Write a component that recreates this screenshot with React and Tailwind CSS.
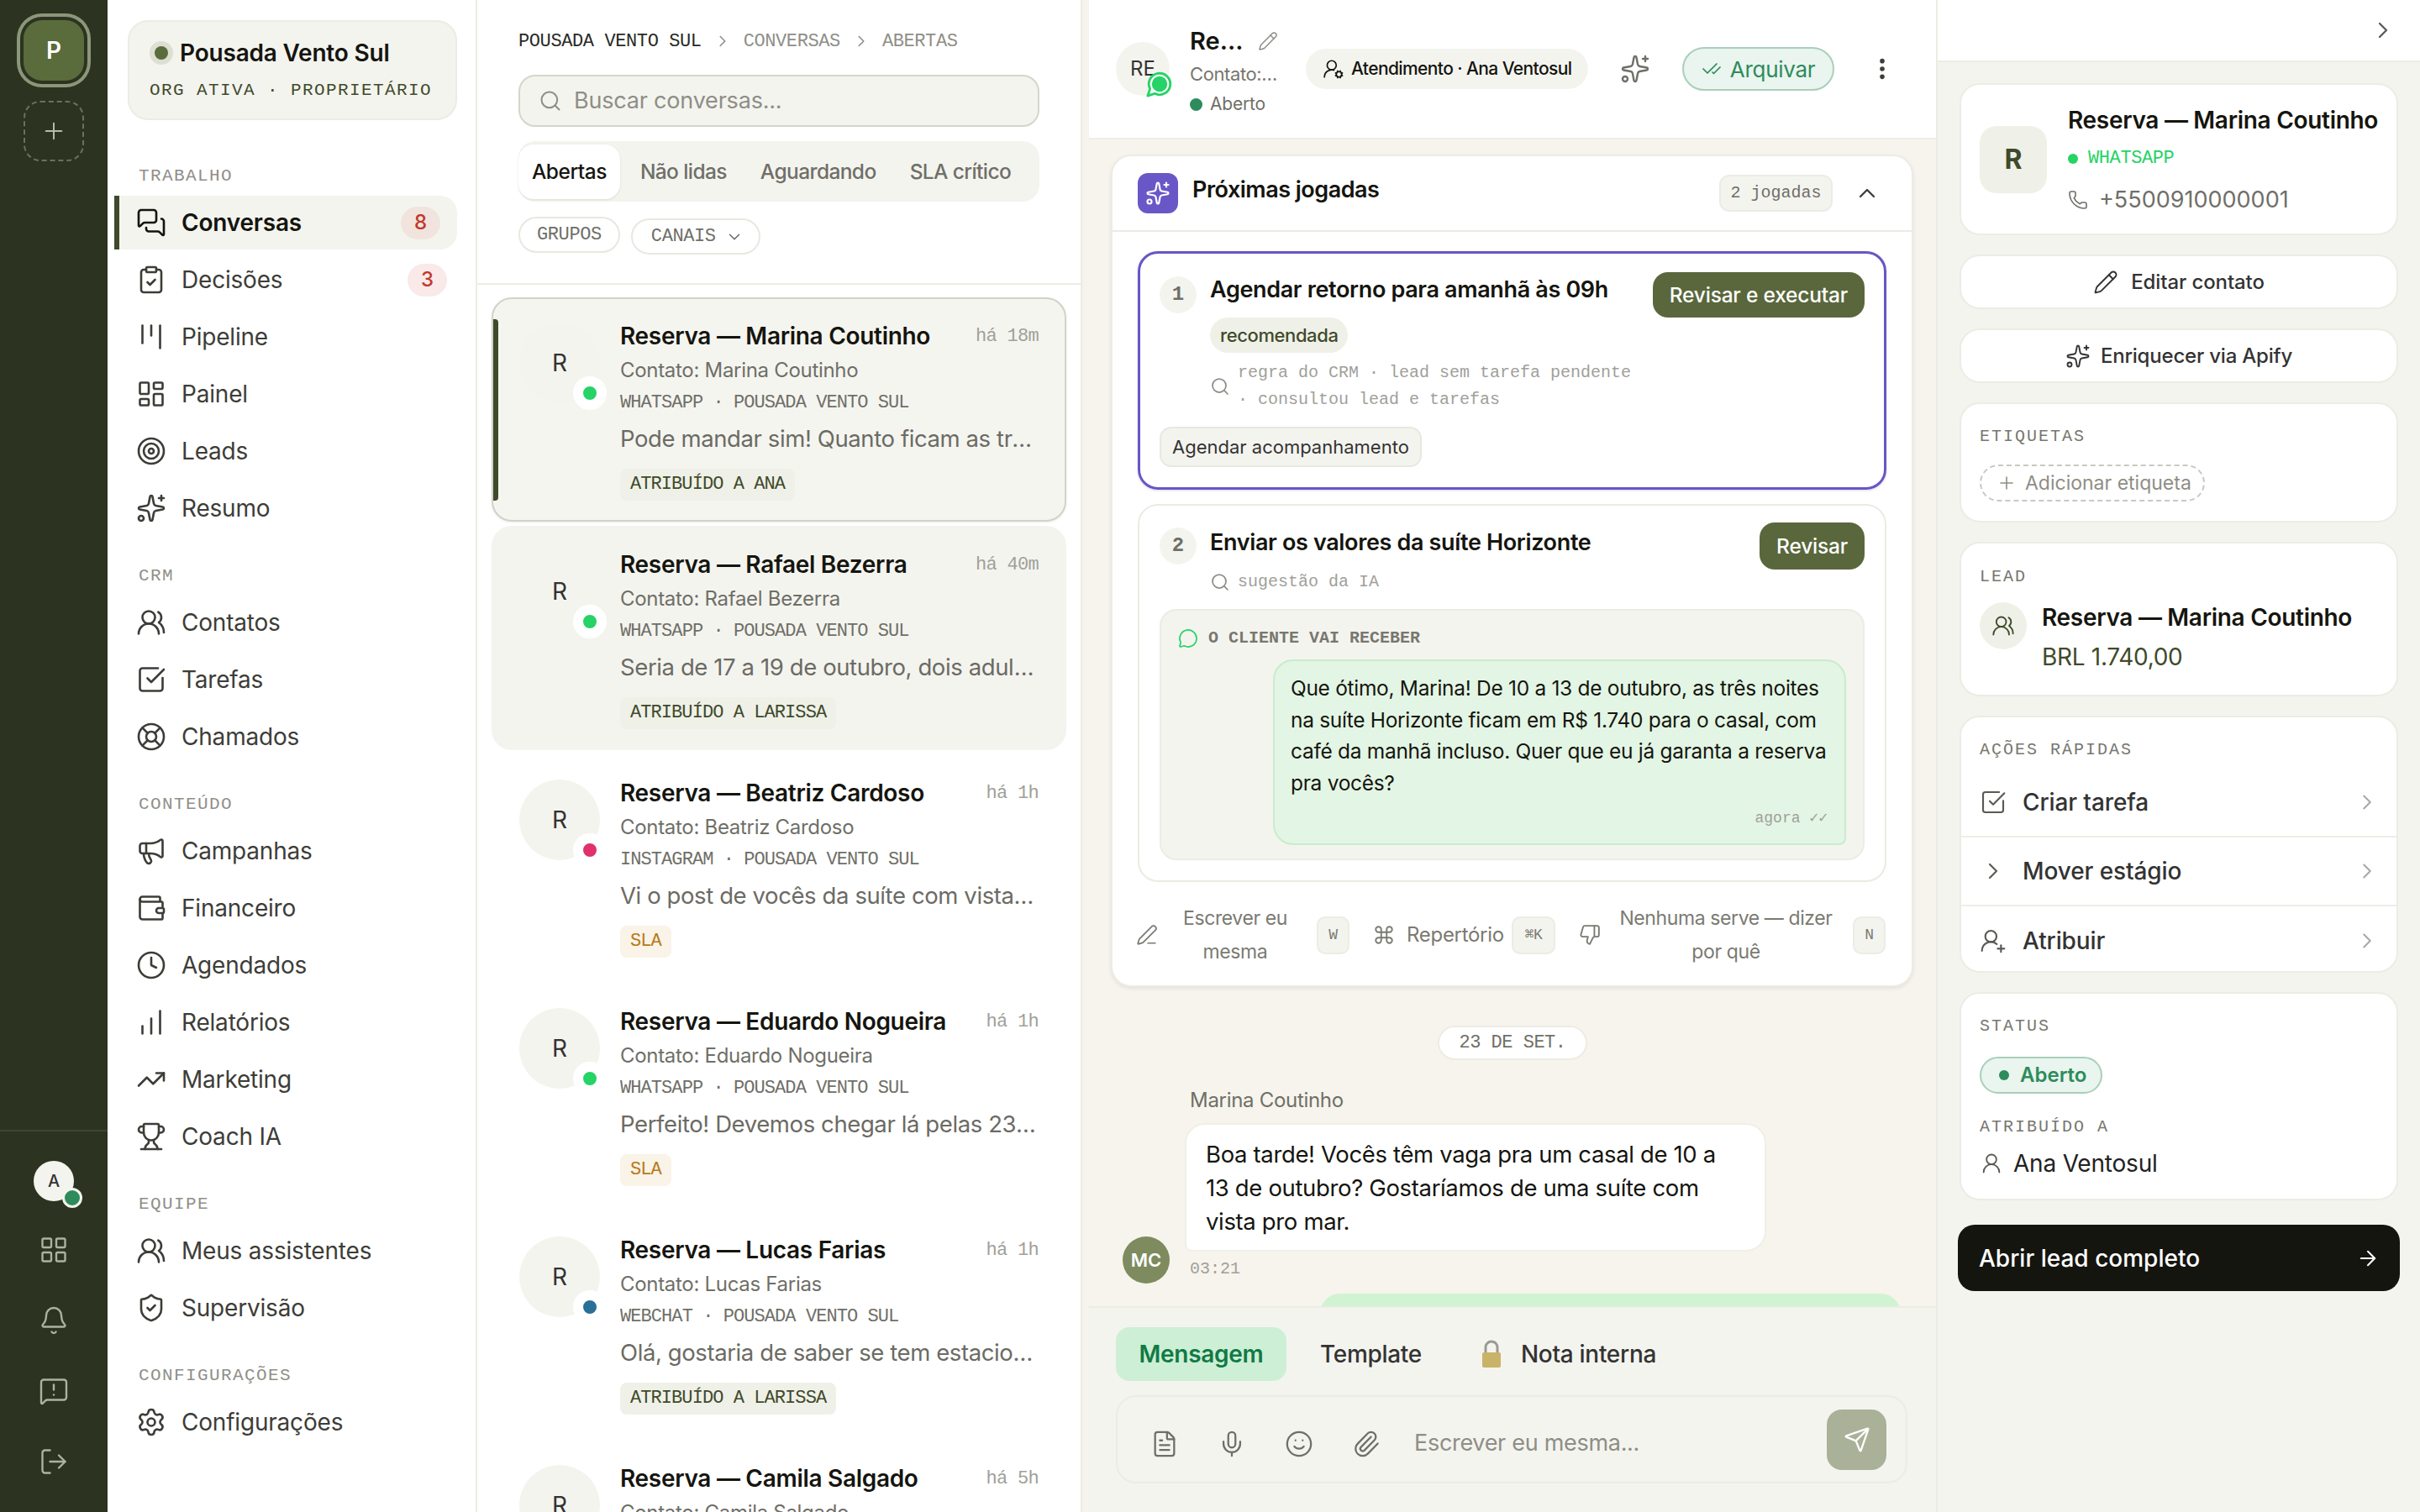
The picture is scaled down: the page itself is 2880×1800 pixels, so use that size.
import {
  ArrowRight, Bell, ChartNoAxesColumnIncreasing, CheckCheck, ChevronDown, ChevronRight, ChevronUp, ClipboardCheck,
  Clock, Command, EllipsisVertical, FileText, LayoutDashboard, LayoutGrid, LifeBuoy, LogOut, Megaphone,
  MessageCircle, MessageSquareWarning, MessagesSquare, Mic, Paperclip, Pencil, PenLine, Phone, Plus, Search, Send,
  Settings, ShieldCheck, Smile, Sparkles, SquareCheckBig, Target, ThumbsDown, TrendingUp, Trophy,
  UserRound, UserRoundCog, UserRoundPlus, UsersRound, Wallet, Kanban,
} from 'lucide-react';

const mono = "font-['Liberation_Mono',monospace]";

const navSections = [
  {
    label: 'TRABALHO',
    items: [
      { name: 'Conversas', icon: MessagesSquare, active: true, badge: '8' },
      { name: 'Decisões', icon: ClipboardCheck, badge: '3' },
      { name: 'Pipeline', icon: Kanban },
      { name: 'Painel', icon: LayoutDashboard },
      { name: 'Leads', icon: Target },
      { name: 'Resumo', icon: Sparkles },
    ],
  },
  {
    label: 'CRM',
    items: [
      { name: 'Contatos', icon: UsersRound },
      { name: 'Tarefas', icon: SquareCheckBig },
      { name: 'Chamados', icon: LifeBuoy },
    ],
  },
  {
    label: 'CONTEÚDO',
    items: [
      { name: 'Campanhas', icon: Megaphone },
      { name: 'Financeiro', icon: Wallet },
      { name: 'Agendados', icon: Clock },
      { name: 'Relatórios', icon: ChartNoAxesColumnIncreasing },
      { name: 'Marketing', icon: TrendingUp },
      { name: 'Coach IA', icon: Trophy },
    ],
  },
  {
    label: 'EQUIPE',
    items: [
      { name: 'Meus assistentes', icon: UsersRound },
      { name: 'Supervisão', icon: ShieldCheck },
    ],
  },
  {
    label: 'CONFIGURAÇÕES',
    items: [{ name: 'Configurações', icon: Settings }],
  },
];

const conversas = [
  { nome: 'Marina Coutinho', tempo: 'há 18m', canal: 'WHATSAPP', dot: 'bg-[#25d366]', preview: 'Pode mandar sim! Quanto ficam as três noites com café?', tag: 'ATRIBUÍDO A ANA', selected: true },
  { nome: 'Rafael Bezerra', tempo: 'há 40m', canal: 'WHATSAPP', dot: 'bg-[#25d366]', preview: 'Seria de 17 a 19 de outubro, dois adultos e uma criança', tag: 'ATRIBUÍDO A LARISSA', hover: true },
  { nome: 'Beatriz Cardoso', tempo: 'há 1h', canal: 'INSTAGRAM', dot: 'bg-[#e1306c]', preview: 'Vi o post de vocês da suíte com vista para o mar e adorei', tag: 'SLA', sla: true },
  { nome: 'Eduardo Nogueira', tempo: 'há 1h', canal: 'WHATSAPP', dot: 'bg-[#25d366]', preview: 'Perfeito! Devemos chegar lá pelas 23h, tem problema?', tag: 'SLA', sla: true },
  { nome: 'Lucas Farias', tempo: 'há 1h', canal: 'WEBCHAT', dot: 'bg-[#2a6f97]', preview: 'Olá, gostaria de saber se tem estacionamento na pousada', tag: 'ATRIBUÍDO A LARISSA' },
  { nome: 'Camila Salgado', tempo: 'há 5h', canal: 'WHATSAPP', dot: 'bg-[#25d366]', preview: 'Obrigada pelo retorno!', tag: 'SLA', sla: true },
];

function Rail() {
  const railIcons = [LayoutGrid, Bell, MessageSquareWarning, LogOut];
  return (
    <aside className="w-[128px] h-full shrink-0 bg-[#2c3320] flex flex-col items-center">
      <div className="mt-[24px] w-[72px] h-[72px] rounded-[22px] bg-[#5a6b3c] text-white text-[28px] font-semibold flex items-center justify-center shadow-[0_0_0_4px_#2c3320,0_0_0_8px_#8c9679]">
        P
      </div>
      <div className="mt-[24px] w-[72px] h-[72px] rounded-[20px] border-2 border-dashed border-[#6a7258] text-[#b4bba6] flex items-center justify-center">
        <Plus size={32} strokeWidth={1.5} />
      </div>
      <div className="mt-auto w-full border-t-2 border-[#3e4632] pt-[35px] pb-[42px] flex flex-col items-center">
        <div className="relative w-[48px] h-[48px] rounded-full bg-[#f4f4ef] text-[#333] text-[20px] font-medium flex items-center justify-center">
          A
          <span className="absolute right-[-10px] bottom-[-8px] w-[24px] h-[24px] rounded-full bg-[#2e8b5c] border-[3px] border-[#f4f4ef]" />
        </div>
        <div className="mt-[40px] flex flex-col items-center gap-[48px]">
          {railIcons.map((Icon, i) => (
            <Icon key={i} size={36} strokeWidth={1.6} className="text-[#aab3a0]" />
          ))}
        </div>
      </div>
    </aside>
  );
}

function NavItem({ item }) {
  const Icon = item.icon;
  return (
    <div
      className={`h-[64px] flex items-center gap-[18px] pl-[20px] border-l-[6px] rounded-r-[20px] ${
        item.active ? 'border-[#3f4a2c] bg-[#f4f4ef] text-[#15150f] font-semibold pr-[20px]' : 'border-transparent text-[#3d3d38] pr-[12px]'
      }`}
    >
      <Icon size={36} strokeWidth={1.75} className="shrink-0" />
      <span className="text-[28px] flex-1 tracking-[-0.2px]">{item.name}</span>
      {item.badge && (
        <span
          className={`w-[47px] h-[39px] rounded-full text-[24px] font-medium text-[#c0392b] flex items-center justify-center ${
            item.active ? 'bg-[#f1e4df]' : 'bg-[#f9e9e9]'
          }`}
        >
          {item.badge}
        </span>
      )}
    </div>
  );
}

function Sidebar() {
  return (
    <nav className="w-[440px] h-full shrink-0 bg-white border-r-2 border-[#ecece5] pl-[8px] pr-[22px]">
      <div className="ml-[16px] mt-[24px] h-[119px] rounded-[24px] bg-[#f4f4ef] border-2 border-[#ecece5] pl-[24px] pt-[16px]">
        <div className="flex items-center gap-[8px]">
          <span className="w-[28px] h-[28px] rounded-full bg-[#dcdfd2] flex items-center justify-center">
            <span className="w-[16px] h-[16px] rounded-full bg-[#5a6b3c]" />
          </span>
          <span className="text-[28px] font-semibold text-[#15150f] tracking-[-0.2px]">Pousada Vento Sul</span>
        </div>
        <div className={`${mono} text-[21px] tracking-[1.4px] text-[#3f4a2c] mt-[8px] whitespace-nowrap`}>ORG ATIVA · PROPRIETÁRIO</div>
      </div>
      <div className="mt-[52px]">
        {navSections.map((section) => (
          <div key={section.label} className="mt-[34px]">
            <div className={`${mono} h-[30px] leading-[30px] pl-[29px] mb-[8px] text-[21px] tracking-[1.4px] text-[#8f8f88]`}>{section.label}</div>
            <div className="flex flex-col gap-[4px]">
              {section.items.map((item) => (
                <NavItem key={item.name} item={item} />
              ))}
            </div>
          </div>
        ))}
      </div>
    </nav>
  );
}

function ConversaItem({ c }) {
  const cardClass = c.selected
    ? 'bg-[#f5f5f0] border-[#d2d2c8] shadow-[0_1px_3px_rgba(0,0,0,0.08)]'
    : c.hover
    ? 'bg-[#f4f4ef] border-transparent'
    : 'bg-white border-transparent';
  return (
    <div className={`relative shrink-0 h-[267px] rounded-[24px] border-2 flex pl-[31px] pr-[31px] pt-[26px] ${cardClass}`}>
      {c.selected && <span className="absolute left-0 top-[24px] bottom-[23px] w-[6px] rounded-r-[4px] bg-[#3f4a2c]" />}
      <div className="relative mt-[2px] w-[96px] h-[96px] shrink-0 rounded-full bg-[#f4f4ef] text-[#333] text-[28px] flex items-center justify-center">
        R
        <span className={`absolute right-[-8px] bottom-[-8px] w-[40px] h-[40px] rounded-full border-[12px] border-white ${c.dot}`} />
      </div>
      <div className="ml-[24px] flex-1 min-w-0">
        <div className="h-[36px] flex items-center justify-between">
          <span className="text-[28px] font-semibold text-[#15150f] tracking-[-0.3px] whitespace-nowrap">Reserva — {c.nome}</span>
          <span className={`${mono} text-[22px] tracking-[-0.7px] text-[#a0a09a] whitespace-nowrap`}>{c.tempo}</span>
        </div>
        <div className="mt-[8px] h-[30px] leading-[30px] text-[24px] text-[#6f6f68] tracking-[-0.3px]">Contato: {c.nome}</div>
        <div className={`${mono} mt-[11px] h-[26px] leading-[26px] text-[22px] tracking-[-0.93px] text-[#6f6f68]`}>{c.canal} · POUSADA VENTO SUL</div>
        <div className="mt-[11px] h-[36px] leading-[36px] text-[27.5px] text-[#6b6b64] tracking-[-0.4px] truncate">{c.preview}</div>
        <span
          className={`${mono} inline-block mt-[18px] h-[38px] leading-[38px] px-[12px] rounded-[8px] text-[22px] tracking-[-0.93px] ${
            c.sla ? 'bg-[#f9f3e8] text-[#b8791a]' : 'bg-[#eff1e8] text-[#3f4a2c]'
          }`}
        >
          {c.tag}
        </span>
      </div>
    </div>
  );
}

function ListaConversas() {
  return (
    <section className="w-[720px] h-full shrink-0 bg-white border-r-2 border-[#ecece5] flex flex-col">
      <div className="h-[339px] shrink-0 border-b-2 border-[#ecece5] px-[49px] pt-[35px]">
        <div className={`${mono} h-[28px] flex items-center text-[22px] tracking-[-0.4px] text-[#8f8f88]`}>
          <span className="text-[#2a2a25]">POUSADA VENTO SUL</span>
          <ChevronRight size={22} strokeWidth={1.75} className="mx-[14px]" />
          <span>CONVERSAS</span>
          <ChevronRight size={22} strokeWidth={1.75} className="mx-[14px]" />
          <span>ABERTAS</span>
        </div>
        <div className="mt-[26px] h-[62px] rounded-[20px] bg-[#f4f4ef] border-2 border-[#d5d5cb] flex items-center pl-[22px] gap-[14px]">
          <Search size={28} strokeWidth={1.75} className="text-[#8e8e86]" />
          <span className="text-[27px] text-[#8e8e86] tracking-[-0.2px]">Buscar conversas...</span>
        </div>
        <div className="mt-[17px] h-[72px] rounded-[20px] bg-[#f4f4ef] flex items-center gap-[8px] text-[24.5px] text-[#6f6f68] whitespace-nowrap">
          <span className="h-[65px] px-[16px] rounded-[18px] bg-white text-[#15150f] font-medium flex items-center shadow-[0_1px_3px_rgba(0,0,0,0.1)] tracking-[-0.5px]">Abertas</span>
          <span className="px-[16px] font-medium tracking-[-0.6px]">Não lidas</span>
          <span className="px-[16px] font-medium tracking-[-0.6px]">Aguardando</span>
          <span className="px-[16px] font-medium tracking-[-0.6px]">SLA crítico</span>
        </div>
        <div className={`${mono} mt-[18px] flex gap-[13px] text-[22px] tracking-[-0.4px] text-[#6f6f68]`}>
          <span className="h-[43px] px-[20px] rounded-full border-2 border-[#e8e8e1] flex items-center">GRUPOS</span>
          <span className="mt-[2px] h-[43px] pl-[22px] pr-[18px] rounded-full border-2 border-[#e8e8e1] flex items-center gap-[11px]">
            CANAIS
            <ChevronDown size={22} strokeWidth={1.75} />
          </span>
        </div>
      </div>
      <div className="flex-1 min-h-0 overflow-hidden pl-[17px] pr-[17px] pt-[15px] flex flex-col gap-[5px]">
        {conversas.map((c) => (
          <ConversaItem key={c.nome} c={c} />
        ))}
      </div>
    </section>
  );
}

function Jogadas() {
  return (
    <div className="w-[955px] h-[991px] shrink-0 rounded-[24px] bg-white border-2 border-[#ecece5] shadow-[0_2px_4px_rgba(0,0,0,0.08)]">
      <div className="h-[88px] px-[30px] border-b-2 border-[#ecece5] box-content flex items-center">
        <span className="w-[48px] h-[48px] rounded-[12px] bg-[#6a57c7] flex items-center justify-center">
          <Sparkles size={30} strokeWidth={1.75} className="text-white" />
        </span>
        <span className="ml-[17px] mb-[8px] text-[27px] font-semibold text-[#15150f] tracking-[-0.5px]">Próximas jogadas</span>
        <span className={`${mono} ml-auto w-[135px] h-[44px] rounded-[12px] bg-[#f4f4ef] border-2 border-[#ecece5] text-[20px] text-[#6f6f68] flex items-center justify-center`}>2 jogadas</span>
        <ChevronUp size={32} strokeWidth={1.75} className="ml-[25px] mr-[7px] text-[#3d3d38]" />
      </div>
      <div className="px-[30px] pt-[23px]">
        {/* jogada recomendada */}
        <div className="h-[284px] rounded-[24px] border-[3px] border-[#6657c4] pl-[23px] pr-[23px] pt-[23px] shadow-[0_1px_3px_rgba(102,87,196,0.25)]">
          <div className="flex items-start">
            <span className={`${mono} mt-[4px] w-[44px] h-[44px] shrink-0 rounded-full bg-[#f4f4ef] text-[24px] font-bold text-[#6f6f68] flex items-center justify-center`}>1</span>
            <div className="ml-[16px] flex-1 min-w-0">
              <div className="mt-[2px] h-[36px] leading-[36px] text-[27px] font-semibold text-[#15150f] tracking-[-0.35px] whitespace-nowrap">Agendar retorno para amanhã às 09h</div>
              <span className="inline-block mt-[15px] h-[42px] leading-[42px] px-[12px] rounded-full bg-[#eff1e8] text-[22px] font-medium text-[#3f4a2c] tracking-[-0.4px]">recomendada</span>
              <div className="mt-[8px] flex items-center gap-[9px]">
                <Search size={24} strokeWidth={1.75} className="text-[#8e8e86] shrink-0" />
                <p className={`${mono} w-[480px] text-[20px] leading-[32px] text-[#a0a09a]`}>regra do CRM · lead sem tarefa pendente · consultou lead e tarefas</p>
              </div>
            </div>
            <span className="-mt-[1px] h-[54px] px-[20px] shrink-0 rounded-[18px] bg-[#5a673d] text-white text-[24.5px] font-medium flex items-center tracking-[-0.2px]">Revisar e executar</span>
          </div>
          <span className="inline-block mt-[16px] h-[48px] leading-[44px] px-[13px] rounded-[14px] bg-[#f4f4ef] border-2 border-[#e8e8e1] text-[22px] text-[#333]">Agendar acompanhamento</span>
        </div>
        {/* jogada 2, com a previa da mensagem */}
        <div className="mt-[17px] h-[450px] rounded-[24px] border-2 border-[#ebebe4] pl-[24px] pr-[24px] pt-[23px]">
          <div className="flex items-start">
            <span className={`${mono} mt-[3px] w-[44px] h-[44px] shrink-0 rounded-full bg-[#f4f4ef] text-[24px] font-bold text-[#6f6f68] flex items-center justify-center`}>2</span>
            <div className="ml-[16px] flex-1 min-w-0">
              <div className="mt-[3px] h-[36px] leading-[36px] text-[27px] font-semibold text-[#15150f] tracking-[-0.35px] whitespace-nowrap">Enviar os valores da suíte Horizonte</div>
              <div className="mt-[13px] flex items-center gap-[9px]">
                <Search size={24} strokeWidth={1.75} className="text-[#8e8e86] shrink-0" />
                <p className={`${mono} text-[20px] leading-[32px] text-[#a0a09a]`}>sugestão da IA</p>
              </div>
            </div>
            <span className="-mt-[3px] h-[56px] px-[20px] shrink-0 rounded-[18px] bg-[#5a673d] text-white text-[24.5px] font-medium flex items-center tracking-[-0.2px]">Revisar</span>
          </div>
          <div className="mt-[16px] h-[299px] rounded-[20px] bg-[#f4f4ef] border-2 border-[#ecece5] pr-[20px]">
            <div className="h-[58px] pl-[20px] pt-[8px] flex items-center gap-[12px]">
              <MessageCircle size={24} strokeWidth={1.75} className="text-[#25d366]" />
              <span className={`${mono} text-[20px] font-bold text-[#77776f]`}>O CLIENTE VAI RECEBER</span>
            </div>
            <div className="ml-[133px] h-[221px] rounded-[24px] rounded-br-[8px] bg-[#e3f5e4] border-2 border-[#c9eccd] pl-[19px] pr-[10px] pt-[14px]">
              <p className="text-[24.5px] leading-[37.6px] text-[#15150f] tracking-[-0.3px]">
                Que ótimo, Marina! De 10 a 13 de outubro, as três noites na suíte Horizonte ficam em R$ 1.740 para o casal, com café da manhã incluso. Quer que eu já garanta a reserva pra vocês?
              </p>
              <div className={`${mono} mt-[11px] pr-[10px] text-[18px] leading-[24px] text-right text-[#a0a09a]`}>agora ✓✓</div>
            </div>
          </div>
        </div>
        {/* acoes */}
        <div className="mt-[23px] flex items-center text-[23px] leading-[40px] text-[#7a7a72] tracking-[-0.4px] -ml-[2px]">
          <PenLine size={26} strokeWidth={1.6} className="shrink-0" />
          <span className="ml-[26px] w-[132px] text-center">Escrever eu mesma</span>
          <Kbd className="ml-[31px] w-[39px]">W</Kbd>
          <Command size={26} strokeWidth={1.75} className="ml-[28px] shrink-0" />
          <span className="ml-[14px] w-[114px] whitespace-nowrap text-[24px] tracking-[-0.3px]">Repertório</span>
          <Kbd className="ml-[11px] w-[52px]">⌘K</Kbd>
          <ThumbsDown size={26} strokeWidth={1.75} className="ml-[28px] shrink-0" />
          <span className="ml-[18px] w-[262px] text-center">Nenhuma serve — dizer por quê</span>
          <Kbd className="ml-[20px] w-[39px]">N</Kbd>
        </div>
      </div>
    </div>
  );
}

function Kbd({ className, children }) {
  return (
    <span className={`${mono} ${className} h-[45px] shrink-0 rounded-[10px] bg-[#f4f4ef] border-2 border-[#ecece5] text-[18px] flex items-center justify-center`}>
      {children}
    </span>
  );
}

function Chat() {
  return (
    <section className="flex-1 min-w-0 h-full flex flex-col ml-[8px] border-r-2 border-[#ecece5]">
      <header className="h-[166px] shrink-0 bg-white border-b-2 border-[#eeeee7] flex items-center pl-[32px]">
        <div className="relative w-[64px] h-[64px] rounded-full bg-[#f4f4ef] text-[24px] text-[#333] flex items-center justify-center shrink-0">
          RE
          <svg width="34" height="34" viewBox="0 0 24 24" className="absolute right-[-5px] bottom-[-3px]">
            <path d="M7.9 20A9 9 0 1 0 4 16.1L2 22Z" fill="#fff" stroke="#25d366" strokeWidth="2" strokeLinejoin="round" />
            <circle cx="12" cy="12" r="6.5" fill="#25d366" />
          </svg>
        </div>
        <div className="ml-[24px] mt-[5px] w-[114px] shrink-0">
          <div className="h-[36px] flex items-center">
            <span className="w-[66px] truncate text-[29px] font-semibold text-[#15150f]">Reserva — Marina Coutinho</span>
            <Pencil size={24} strokeWidth={1.5} className="ml-[15px] text-[#8e8e86] shrink-0" />
          </div>
          <div className="mt-[6px] w-[108px] truncate text-[22px] leading-[30px] text-[#77776f] tracking-[-0.4px]">Contato: Marina Coutinho</div>
          <div className="mt-[7px] flex items-center gap-[9px] text-[21px] leading-[28px] text-[#6f6f68] tracking-[-0.2px]">
            <span className="w-[15px] h-[15px] rounded-full bg-[#2e8b5c]" />
            Aberto
          </div>
        </div>
        <div className="ml-[24px] h-[48px] w-[336px] shrink-0 rounded-full bg-[#f4f4ef] flex items-center pl-[20px] gap-[8px]">
          <UserRoundCog size={26} strokeWidth={1.6} className="text-[#15150f]" />
          <span className="text-[21px] font-medium text-[#15150f] tracking-[-0.6px] whitespace-nowrap">Atendimento · Ana Ventosul</span>
        </div>
        <Sparkles size={36} strokeWidth={1.6} className="ml-[38px] text-[#6f6f68] shrink-0" />
        <div className="ml-[38px] h-[52px] w-[181px] shrink-0 rounded-full bg-[#e9f5ee] border-2 border-[#a9cfbb] text-[#2f8a5c] text-[26px] flex items-center justify-center gap-[10px] tracking-[-0.3px]">
          <CheckCheck size={24} strokeWidth={1.75} />
          Arquivar
        </div>
        <EllipsisVertical size={32} strokeWidth={2.2} className="ml-[41px] text-[#3d3d38] shrink-0" />
      </header>
      <div className="flex-1 min-h-0 overflow-hidden bg-[#f6f4ec] pl-[26px] pt-[18px]">
        <Jogadas />
        <div className="-ml-[26px] mt-[46px] flex justify-center">
          <span className={`${mono} w-[178px] h-[41px] rounded-full bg-white border-2 border-[#ecece5] text-[22px] tracking-[-0.5px] text-[#6f6f68] flex items-center justify-center`}>23 DE SET.</span>
        </div>
        <div className="-ml-[26px] mt-[33px] pl-[40px] flex items-end">
          <span className="w-[56px] h-[56px] rounded-full bg-[#7d8b5e] text-white text-[22px] font-semibold flex items-center justify-center -mb-[5px] shrink-0">MC</span>
          <div className="ml-[24px]">
            <div className="h-[30px] leading-[30px] text-[24px] text-[#6f6f68] tracking-[-0.3px]">Marina Coutinho</div>
            <div className="-ml-[6px] mt-[12px] w-[692px] h-[153px] rounded-[24px] rounded-bl-[8px] bg-white border-2 border-[#efefe8] pl-[23px] pr-[30px] pt-[15px] text-[27.5px] leading-[40px] text-[#15150f] tracking-[-0.35px]">
              Boa tarde! Vocês têm vaga pra um casal de 10 a 13 de outubro? Gostaríamos de uma suíte com vista pro mar.
            </div>
            <div className={`${mono} mt-[9px] h-[24px] leading-[24px] text-[20px] text-[#a0a09a]`}>03:21</div>
          </div>
        </div>
        <div className="ml-[249px] mt-[17px] w-[691px] h-[120px] rounded-[24px] bg-[#d0f3d2]" />
      </div>
      <div className="h-[245px] shrink-0 bg-[#f4f4ef] border-t-2 border-[#ecece5] pl-[32px] pt-[23px]">
        <div className="flex items-center text-[28px] h-[64px] font-medium tracking-[-0.3px]">
          <span className="w-[203px] h-[64px] rounded-[16px] bg-[#cdefd6] text-[#117a45] font-semibold flex items-center justify-center">Mensagem</span>
          <span className="ml-[40px] text-[#333]">Template</span>
          {/* cadeado desenhado, sem fonte de emoji */}
          <svg width="26" height="34" viewBox="0 0 26 34" className="ml-[70px]">
            <path d="M6 16V9a7 7 0 0 1 14 0v7" fill="none" stroke="#9a9a94" strokeWidth="3" />
            <rect x="2" y="15" width="22" height="18" rx="2" fill="#c9b368" />
          </svg>
          <span className="ml-[22px] text-[#333]">Nota interna</span>
        </div>
        <div className="mt-[17px] w-[942px] h-[105px] rounded-[24px] border-2 border-[#ecece5] flex items-center pl-[39px] text-[#6f6f68]">
          <FileText size={34} strokeWidth={1.6} className="mt-[10px]" />
          <Mic size={34} strokeWidth={1.6} className="mt-[10px] ml-[46px]" />
          <Smile size={34} strokeWidth={1.6} className="mt-[10px] ml-[46px]" />
          <Paperclip size={34} strokeWidth={1.6} className="mt-[10px] ml-[46px]" />
          <span className="mt-[10px] ml-[40px] text-[27px] text-[#8e8e86] tracking-[-0.3px]">Escrever eu mesma...</span>
          <span className="ml-auto mr-[23px] w-[71px] h-[72px] rounded-[18px] bg-[#a9b198] flex items-center justify-center">
            <Send size={32} strokeWidth={1.75} className="text-white" />
          </span>
        </div>
      </div>
    </section>
  );
}

function Card({ className, children }) {
  return <div className={`w-[522px] rounded-[24px] bg-white border-2 border-[#ecece5] ${className}`}>{children}</div>;
}

function CardLabel({ children, className = '' }) {
  return <div className={`${mono} text-[20px] leading-[24px] tracking-[2px] text-[#77776f] ${className}`}>{children}</div>;
}

function AcaoRapida({ icon: Icon, label, last }) {
  return (
    <div className={`h-[82px] flex items-center pl-[22px] pr-[20px] ${last ? '' : 'border-b-2 border-[#eeeee7]'}`}>
      <Icon size={32} strokeWidth={1.6} className="text-[#5a5a54] shrink-0" />
      <span className="ml-[19px] text-[28px] font-medium text-[#333] tracking-[-0.1px]">{label}</span>
      <ChevronRight size={30} strokeWidth={1.6} className="ml-auto text-[#a8a8a2]" />
    </div>
  );
}

function PainelContato() {
  return (
    <aside className="w-[574px] h-full shrink-0 bg-[#f4f4ef]">
      <div className="h-[74px] bg-white border-b-2 border-[#ecece5] flex items-center justify-end pr-[28px]">
        <ChevronRight size={32} strokeWidth={1.75} className="text-[#5a5a54]" />
      </div>
      <div className="pl-[26px] pt-[25px] flex flex-col">
        <Card className="h-[181px] flex items-center pl-[22px]">
          <div className="w-[80px] h-[80px] rounded-[20px] bg-[#eff1e8] text-[32px] font-bold text-[#3f4a2c] flex items-center justify-center shrink-0">R</div>
          <div className="ml-[25px] min-w-0">
            <div className="text-[28px] leading-[36px] font-semibold text-[#15150f] tracking-[-0.3px] whitespace-nowrap">Reserva — Marina Coutinho</div>
            <div className="mt-[16px] flex items-center gap-[12px]">
              <span className="w-[12px] h-[12px] rounded-full bg-[#25d366]" />
              <span className={`${mono} text-[22px] leading-[24px] tracking-[-0.4px] text-[#25d366]`}>WHATSAPP</span>
            </div>
            <div className="mt-[21px] flex items-center gap-[13px]">
              <Phone size={24} strokeWidth={1.6} className="text-[#6f6f68]" />
              <span className="text-[27px] leading-[32px] text-[#6f6f68]">+5500910000001</span>
            </div>
          </div>
        </Card>
        <Card className="mt-[23px] h-[65px] flex items-center justify-center gap-[15px] text-[24px] font-medium text-[#333] tracking-[-0.1px]">
          <Pencil size={30} strokeWidth={1.5} />
          Editar contato
        </Card>
        <Card className="mt-[23px] h-[65px] flex items-center justify-center gap-[12px] text-[24px] font-medium text-[#333] tracking-[-0.2px]">
          <Sparkles size={30} strokeWidth={1.5} />
          Enriquecer via Apify
        </Card>
        <Card className="mt-[23px] h-[143px] pl-[22px] pt-[27px]">
          <CardLabel>ETIQUETAS</CardLabel>
          <div className="mt-[21px] w-[268px] h-[44px] rounded-full border-2 border-dashed border-[#c8c8c0] flex items-center pl-[18px] gap-[10px] text-[23px] text-[#8e8e86] whitespace-nowrap">
            <Plus size={24} strokeWidth={1.6} />
            Adicionar etiqueta
          </div>
        </Card>
        <Card className="mt-[23px] h-[184px] pl-[22px] pt-[28px]">
          <CardLabel>LEAD</CardLabel>
          <div className="mt-[18px] flex">
            <span className="w-[56px] h-[56px] rounded-full bg-[#eff1e8] text-[#3f4a2c] flex items-center justify-center shrink-0">
              <UsersRound size={28} strokeWidth={1.6} />
            </span>
            <div className="ml-[18px]">
              <div className="text-[28px] leading-[36px] font-semibold text-[#15150f] tracking-[-0.3px] whitespace-nowrap">Reserva — Marina Coutinho</div>
              <div className="mt-[11px] text-[28px] leading-[36px] text-[#3f4a2c] tracking-[-0.3px]">BRL 1.740,00</div>
            </div>
          </div>
        </Card>
        <Card className="mt-[23px] h-[306px]">
          <CardLabel className="pl-[22px] pt-[27px] h-[61px]">AÇÕES RÁPIDAS</CardLabel>
          <AcaoRapida icon={SquareCheckBig} label="Criar tarefa" />
          <AcaoRapida icon={ChevronRight} label="Mover estágio" />
          <AcaoRapida icon={UserRoundPlus} label="Atribuir" last />
        </Card>
        <Card className="mt-[23px] h-[248px] pl-[22px] pt-[27px]">
          <CardLabel>STATUS</CardLabel>
          <div className="mt-[24px] w-[146px] h-[44px] rounded-full bg-[#e9f5ee] border-2 border-[#a9cfbb] flex items-center pl-[21px] gap-[13px] text-[24px] font-semibold text-[#2e8b5c]">
            <span className="w-[12px] h-[12px] rounded-full bg-[#2e8b5c]" />
            Aberto
          </div>
          <CardLabel className="mt-[28px]">ATRIBUÍDO A</CardLabel>
          <div className="mt-[13px] flex items-center gap-[12px] text-[28px] leading-[36px] text-[#222] tracking-[-0.2px]">
            <UserRound size={28} strokeWidth={1.6} className="text-[#5a5a54]" />
            Ana Ventosul
          </div>
        </Card>
        <div className="mt-[29px] -ml-[2px] w-[526px] h-[79px] rounded-[20px] bg-[#15150f] text-white text-[28px] font-medium flex items-center justify-between pl-[25px] pr-[24px]">
          Abrir lead completo
          <ArrowRight size={28} strokeWidth={1.75} />
        </div>
      </div>
    </aside>
  );
}

export default function App() {
  return (
    <div className="w-[2880px] h-[1800px] overflow-hidden flex bg-[#f4f3ec] font-['Inter',sans-serif]">
      <Rail />
      <Sidebar />
      <ListaConversas />
      <Chat />
      <PainelContato />
    </div>
  );
}
